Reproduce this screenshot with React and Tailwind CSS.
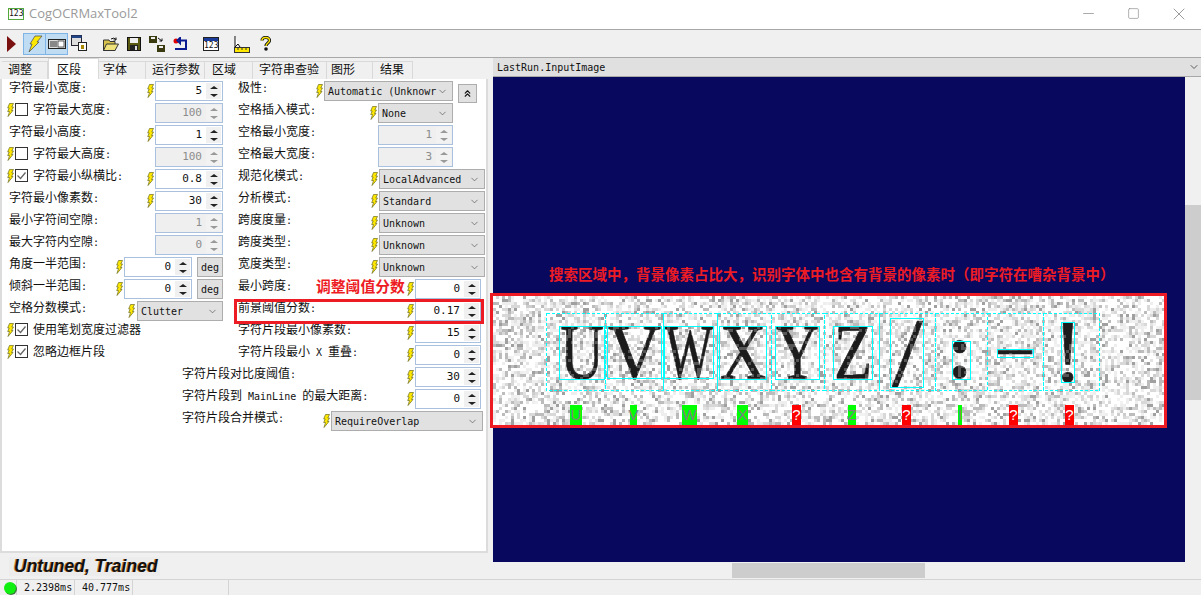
import React from 'react';
import { ChevronDown, ChevronsUp, Minus, Square, X } from 'lucide-react';

const cjk = "font-['Noto_Sans_CJK_SC','Liberation_Sans',sans-serif]";
const mono = "font-['DejaVu_Sans_Mono','Liberation_Mono',monospace]";

// mixes CJK and 6px wide latin, as the NSimSun labels do
const Label = ({ text }) => (
  <span className="whitespace-pre text-[12px] leading-[14px] text-[#111]">
    {text.split(/([ -~]+)/).map((part, i) =>
      /^[ -~]+$/.test(part) ? (
        <span key={i} className={`${mono} text-[10px]`}>{part}</span>
      ) : (
        <span key={i}>{part}</span>
      )
    )}
  </span>
);

const Bolt = ({ className = '' }) => (
  <svg width="7" height="14" viewBox="0 0 7 14" className={`shrink-0 ${className}`}>
    <path d="M2.5 .5H6.5L4.8 4H6.5L4.5 7.5H6L1 13.5L2.5 8.5H.7L2.2 5H.7Z" fill="#ffe800" stroke="#6a6a20" strokeWidth=".7" />
  </svg>
);

const Spinner = ({ value, disabled, width = 'w-[68px]' }) => (
  <div className={`${width} h-[20px] flex border border-[#a9c1de] ${disabled ? 'bg-[#efefef]' : 'bg-white'}`}>
    <div className={`flex-1 pr-[4px] text-right ${mono} text-[11px] leading-[18px] ${disabled ? 'text-[#8c8c8c]' : 'text-[#111]'}`}>{value}</div>
    <div className={`w-[15px] my-px mr-px flex flex-col justify-between ${disabled ? 'bg-[#dedede]' : 'bg-[#adadad]'}`}>
      <div className={`h-[8px] flex items-center justify-center ${disabled ? 'bg-[#f2f2f2]' : 'bg-[#f0f0f0]'}`}>
        <span className={`w-0 h-0 border-x-[4px] border-x-transparent border-b-[3px] ${disabled ? 'border-b-[#999]' : 'border-b-[#222]'}`} />
      </div>
      <div className={`h-[8px] flex items-center justify-center ${disabled ? 'bg-[#f2f2f2]' : 'bg-[#f0f0f0]'}`}>
        <span className={`w-0 h-0 border-x-[4px] border-x-transparent border-t-[3px] ${disabled ? 'border-t-[#999]' : 'border-t-[#222]'}`} />
      </div>
    </div>
  </div>
);

const Select = ({ value, width }) => (
  <div className={`${width} h-[20px] flex items-center justify-between pl-[3px] pr-[4px] bg-[#e1e1e1] border border-[#adadad] ${mono} text-[10px] text-[#111] overflow-hidden`}>
    <span className="whitespace-pre">{value}</span>
    <ChevronDown className="w-[11px] h-[11px] shrink-0 text-[#555]" strokeWidth={1.5} />
  </div>
);

const Check = ({ checked }) => (
  <span className="w-[13px] h-[13px] shrink-0 border border-[#333] bg-white flex items-center justify-center">
    {checked && (
      <svg width="11" height="11" viewBox="0 0 11 11"><path d="M1.5 5.5L4.5 8.5L9.5 2.5" fill="none" stroke="#666" strokeWidth="1.3" /></svg>
    )}
  </span>
);

const Deg = () => (
  <div className={`w-[26px] h-[20px] ml-[5px] flex items-center justify-center bg-[#e1e1e1] border border-[#adadad] ${mono} text-[10px] text-[#111]`}>deg</div>
);

const CheckLabel = ({ label, checked }) => (
  <div className="flex-1 flex items-center pl-[7px] pb-[7px]">
    <Bolt className="mr-[1px]" />
    <Check checked={checked} />
    <div className="ml-[5px] pb-[1px]"><Label text={label} /></div>
  </div>
);

// left column rows
const FieldRow = ({ label, value, disabled, check }) => (
  <div className="h-[22px] flex items-center pr-[9px]">
    {check === undefined ? (
      <div className="flex-1 pl-[9px] pb-[8px]"><Label text={label} /></div>
    ) : (
      <CheckLabel label={label} checked={check} />
    )}
    {!disabled && <Bolt className="mr-[1px]" />}
    <Spinner value={value} disabled={disabled} />
  </div>
);

const DegRow = ({ label }) => (
  <div className="h-[22px] flex items-center pr-[9px]">
    <div className="flex-1 pl-[9px] pb-[8px]"><Label text={label} /></div>
    <Bolt className="mr-[1px]" />
    <Spinner value="0" />
    <Deg />
  </div>
);

const MidSelect = ({ label, value, wide }) => (
  <div className={`h-[22px] flex items-center ${wide ? 'pr-[1px]' : 'pr-[33px]'}`}>
    <div className="flex-1 pl-[6px] pb-[8px]"><Label text={label} /></div>
    <Bolt className="mr-[1px]" />
    <Select value={value} width={wide ? 'w-[106px]' : 'w-[75px]'} />
  </div>
);

const MidSpin = ({ label, value, disabled, indent = 'pl-[6px]' }) => (
  <div className={`h-[22px] flex items-center ${disabled ? 'pr-[33px]' : 'pr-[5px]'}`}>
    <div className={`flex-1 ${indent} pb-[8px]`}><Label text={label} /></div>
    {!disabled && <Bolt className="mr-[1px]" />}
    <Spinner value={value} disabled={disabled} width={disabled ? 'w-[75px]' : 'w-[66px]'} />
  </div>
);

const tabs = [
  ['调整', 'w-[46px] pl-[6px]'],
  ['区段', 'w-[51px] pl-[8px]'],
  ['字体', 'w-[47px] pl-[4px]'],
  ['运行参数', 'w-[59px] pl-[6px]'],
  ['区域', 'w-[48px] pl-[7px]'],
  ['字符串查验', 'w-[74px] pl-[6px]'],
  ['图形', 'w-[46px] pl-[4px]'],
  ['结果', 'w-[40px] pl-[7px]'],
];

const ToolButton = ({ active, children, className = '' }) => (
  <div className={`w-[23px] h-[22px] flex items-center justify-center border ${active ? 'bg-[#c0dcf3] border-[#7fb4e6]' : 'border-transparent'} ${className}`}>{children}</div>
);

const Toolbar = () => (
  <div className="h-[28px] bg-[#f0f0f0] border-b border-[#a8a8a8] flex items-center pl-[7px]">
    <svg width="9" height="16" viewBox="0 0 9 16"><path d="M0 0L9 8L0 16Z" fill="#7a1010" /></svg>
    <ToolButton active className="ml-[7px]">
      <svg width="16" height="18" viewBox="0 0 16 18"><path d="M8 1H15L10 7L12 7L2 17L5 9L3 9Z" fill="#ffe800" stroke="#555" strokeWidth=".8" /></svg>
    </ToolButton>
    <ToolButton active className="-ml-px">
      <svg width="18" height="10" viewBox="0 0 18 10"><rect x=".5" y=".5" width="17" height="9" fill="#ddd" stroke="#222" /><rect x="2" y="2" width="7" height="6" fill="#888" /><rect x="10" y="2" width="6" height="6" fill="#fff" stroke="#222" strokeWidth=".7" /></svg>
    </ToolButton>
    <svg width="17" height="17" viewBox="0 0 17 17" className="ml-[3px]"><rect x=".5" y=".5" width="10" height="10" fill="#ddd" stroke="#223" /><rect x=".5" y=".5" width="10" height="2.5" fill="#248" /><rect x="7.5" y="7.5" width="8" height="8" fill="#fff" stroke="#222" /><rect x="10" y="10" width="3" height="4" fill="#a80" /></svg>
    <svg width="16" height="14" viewBox="0 0 16 14" className="ml-[15px]"><path d="M.5 3H6L7 4.5H12V13.5H.5Z" fill="#d6c24a" stroke="#333" /><path d="M.5 13.5L3.5 7H15.5L12 13.5Z" fill="#efe27a" stroke="#333" /><path d="M8 2Q11 0 13 2.5M13 .5V3H10.5" fill="none" stroke="#111" /></svg>
    <svg width="14" height="14" viewBox="0 0 14 14" className="ml-[8px]"><rect x=".5" y=".5" width="13" height="13" fill="#5a5a12" stroke="#111" /><rect x="3" y="1" width="8" height="5" fill="#eee" /><rect x="3" y="8" width="8" height="5.5" fill="#222" /><rect x="8" y="9" width="2" height="4" fill="#ddd" /></svg>
    <svg width="16" height="16" viewBox="0 0 16 16" className="ml-[8px]"><rect x="0" y="0" width="8" height="7" fill="#3a3a10" /><rect x="2" y="1" width="4" height="2" fill="#eee" /><rect x="8" y="9" width="8" height="7" fill="#3a3a10" /><rect x="10" y="10" width="4" height="2" fill="#eee" /><path d="M9 2L13 5M13 2.500V5H10.500" fill="none" stroke="#111" /></svg>
    <svg width="16" height="14" viewBox="0 0 16 14" className="ml-[8px]"><circle cx="3" cy="4" r="2.500" fill="#e00000" /><path d="M7 1L4.500 3.500L7 6ZM7 3.500H13V12H2" fill="none" stroke="#0a1a90" strokeWidth="2" /></svg>
    <div className={`ml-[14px] w-[16px] h-[14px] border border-[#222] bg-white ${mono} text-[8px] leading-[9px] text-center text-[#111]`}>
      <div className="h-[3px] bg-[#1c3c9c]" />123
    </div>
    <svg width="16" height="18" viewBox="0 0 16 18" className="ml-[15px]"><path d="M1 1V12L4 9L6 12" fill="#fff" stroke="#111" /><rect x=".5" y="12.500" width="15" height="5" fill="#ffe800" stroke="#333" /><path d="M4 13V15M8 13V15M12 13V15" stroke="#333" /></svg>
    <svg width="11" height="15" viewBox="0 0 11 15" className="ml-[10px]"><path d="M2 4.500C2 .5 9.500 .5 9.500 4.500C9.500 7 6 7 6 10" fill="none" stroke="#111" strokeWidth="3.200" /><path d="M2 4.500C2 .5 9.500 .5 9.500 4.500C9.500 7 6 7 6 10" fill="none" stroke="#ffe800" strokeWidth="1.400" /><circle cx="6" cy="13" r="1.800" fill="#111" /></svg>
  </div>
);

// seeded, so every render gives the same speckle
const rng = (seed) => () => {
  seed = (seed + 0x6d2b79f5) | 0;
  let t = Math.imul(seed ^ (seed >>> 15), 1 | seed);
  t = (t + Math.imul(t ^ (t >>> 7), 61 | t)) ^ t;
  return ((t ^ (t >>> 14)) >>> 0) / 4294967296;
};

const speckle = (() => {
  const r = rng(77);
  const d = ['', '', '', ''];
  const top = [];
  for (let y = 296; y < 426; y += 3) {
    for (let x = 494; x < 1165; x += 3) {
      const v = r();
      const cell = `M${x} ${y}h3v3h-3z`;
      if (v > 0.93) d[3] += cell;
      else if (v > 0.82) d[2] += cell;
      else if (v > 0.66) d[1] += cell;
      else if (v > 0.45) d[0] += cell;
      if (r() > 0.8) top.push(cell);
    }
  }
  return { d, top: top.join('') };
})();

const boxes = [
  [560, 326, 45, 53], [608, 326, 54, 52], [665, 326, 49, 52], [720, 326, 47, 53], [776, 326, 44, 53],
  [834, 326, 39, 53], [891, 318, 33, 69], [953, 341, 18, 38], [998, 349, 36, 8], [1062, 322, 13, 60],
];
const dashed = [[547, 59], [606, 58], [664, 54], [718, 54], [772, 53], [825, 55], [880, 56], [936, 52], [988, 56], [1044, 56]];
// char, left, baseline, x scale, size, family, weight
const glyphs = [
  ['U', 561, 378, 0.78, 78, 'Liberation Serif', 400],
  ['V', 609, 378, 0.94, 78, 'Liberation Serif', 400],
  ['W', 666, 378, 0.65, 78, 'Liberation Serif', 400],
  ['X', 721, 378, 0.82, 78, 'Liberation Serif', 400],
  ['Y', 777, 378, 0.76, 78, 'Liberation Serif', 400],
  ['Z', 835, 378, 0.8, 78, 'Liberation Serif', 400],
  ['/', 893, 386, 1.1, 100, 'Liberation Serif', 400],
  [':', 948, 378, 1, 78, 'Liberation Serif', 700],
  ['—', 999, 362, 0.94, 36, 'Liberation Sans', 700],
  ['!', 1054, 381, 1, 89, 'Liberation Serif', 400],
];
const tags = [
  [571, 12, 'U', true], [631, 7, 'V', true], [683, 15, 'W', true], [738, 11, 'X', true], [793, 9, '?', false],
  [849, 8, 'Z', true], [903, 9, '?', false], [959, 4, 'I', true], [1010, 9, '?', false], [1066, 9, '?', false],
];

const InspectImage = () => (
  <div className="-ml-[3px] w-[677px] h-[135px] border-[3px] border-[#ed1c24]">
    <svg width="671" height="129" viewBox="494 296 671 129" className="block bg-white" shapeRendering="crispEdges">
      {speckle.d.map((d, i) => (
        <path key={i} d={d} fill={['#eeeeee', '#d8d8d8', '#bcbcbc', '#a0a0a0'][i]} />
      ))}
      <g shapeRendering="auto">
        {glyphs.map(([c, x, y, sx, s, family, weight]) => (
          <text key={c} transform={`translate(${x} ${y}) scale(${sx} 1)`} fontSize={s} fontWeight={weight} fontFamily={family} fill="#1c1c1c" stroke="#1c1c1c" strokeWidth=".7">{c}</text>
        ))}
      </g>
      <path d={speckle.top} fill="#fff" opacity=".25" />
      {dashed.map(([x, w]) => (
        <rect key={x} x={x + 0.5} y={313.5} width={w} height={77} fill="none" stroke="#00ffff" strokeDasharray="3 2" />
      ))}
      {boxes.map(([x, y, w, h]) => (
        <rect key={x} x={x + 0.5} y={y + 0.5} width={w} height={h} fill="none" stroke="#00ffff" />
      ))}
      {tags.map(([x, w, c, ok]) => (
        <g key={x}>
          <rect x={x} y={405} width={w} height={20} fill={ok ? '#00ff00' : '#ff0000'} />
          <text x={x + w / 2} y={420} fontSize="15" textAnchor="middle" fontFamily="'Liberation Sans',sans-serif" fill={ok ? '#808080' : '#ffffff'} shapeRendering="auto">{c}</text>
        </g>
      ))}
    </svg>
  </div>
);

export default function App() {
  return (
    <div className={`w-[1201px] h-[595px] flex flex-col overflow-hidden bg-[#f0f0f0] ${cjk}`}>
      <div className="h-[30px] shrink-0 bg-white border-b border-[#a8a8a8] flex items-center pl-[8px] pb-[2px]">
        <div className={`w-[16px] h-[12px] border border-[#52a83c] ${mono} text-[8px] leading-[10px] text-center text-[#111]`}>123</div>
        <span className="ml-[5px] font-['Open_Sans',sans-serif] text-[13px] text-[#9a9a9a]">CogOCRMaxTool2</span>
        <div className="ml-auto flex items-center text-[#888]">
          <Minus className="w-[17px] h-[17px]" strokeWidth={1} />
          <Square className="ml-[30px] w-[13px] h-[13px]" strokeWidth={1.200} />
          <X className="ml-[29px] mr-[12px] w-[20px] h-[20px]" strokeWidth={1} />
        </div>
      </div>
      <Toolbar />
      <div className="flex-1 flex min-h-0">
        <div className="w-[488px] shrink-0 flex flex-col">
          <div className="h-[21px] flex items-end pl-[2px] text-[12px] text-[#111]">
            {tabs.map(([name, cls]) => (
              <div key={name} className={`${cls} border-r border-[#d9d9d9] ${name === '区段' ? 'h-[21px] bg-white border-l border-t' : 'h-[18px] border-t'} border-t-[#d9d9d9] leading-[14px] whitespace-nowrap`}>
                {name === '区段' ? <div className="pt-[3px]">{name}</div> : name}
              </div>
            ))}
          </div>
          <div className="h-[474px] bg-white border-x-2 border-b-2 border-x-[#dcdcdc] border-b-[#dcdcdc] pt-px text-[12px]">
            <div className="flex -ml-[2px]">
              <div className="w-[232px] shrink-0">
                <FieldRow label="字符最小宽度:" value="5" />
                <FieldRow label="字符最大宽度:" value="100" disabled check={false} />
                <FieldRow label="字符最小高度:" value="1" />
                <FieldRow label="字符最大高度:" value="100" disabled check={false} />
                <FieldRow label="字符最小纵横比:" value="0.8" check={true} />
                <FieldRow label="字符最小像素数:" value="30" />
                <FieldRow label="最小字符间空隙:" value="1" disabled />
                <FieldRow label="最大字符内空隙:" value="0" disabled />
                <DegRow label="角度一半范围:" />
                <DegRow label="倾斜一半范围:" />
                <div className="h-[22px] flex items-center pr-[9px]">
                  <div className="flex-1 pl-[9px] pb-[8px]"><Label text="空格分数模式:" /></div>
                  <Bolt className="mr-[2px]" />
                  <Select value="Clutter" width="w-[86px]" />
                </div>
                <div className="h-[22px] flex items-center">
                  <CheckLabel label="使用笔划宽度过滤器" checked />
                </div>
                <div className="h-[22px] flex items-center">
                  <CheckLabel label="忽略边框片段" checked />
                </div>
              </div>
              <div className="flex-1 min-w-0">
                <div className="h-[22px] flex items-center pr-[1px]">
                  <div className="flex-1 pl-[6px] pb-[8px]"><Label text="极性:" /></div>
                  <Bolt className="mr-[1px]" />
                  <Select value="Automatic (Unknowr" width="w-[129px]" />
                  <div className="ml-[5px] mt-[4px] mr-[8px] w-[19px] h-[19px] flex items-center justify-center bg-[#e1e1e1] border border-[#adadad]">
                    <ChevronsUp className="w-[11px] h-[11px] text-[#111]" strokeWidth={2.500} />
                  </div>
                </div>
                <MidSelect label="空格插入模式:" value="None" />
                <MidSpin label="空格最小宽度:" value="1" disabled />
                <MidSpin label="空格最大宽度:" value="3" disabled />
                <MidSelect label="规范化模式:" value="LocalAdvanced" wide />
                <MidSelect label="分析模式:" value="Standard" wide />
                <MidSelect label="跨度度量:" value="Unknown" wide />
                <MidSelect label="跨度类型:" value="Unknown" wide />
                <MidSelect label="宽度类型:" value="Unknown" wide />
                <div className="relative">
                  <MidSpin label="最小跨度:" value="0" />
                  <span className="absolute left-[84px] top-[-1px] text-[14.800px] leading-[18px] font-bold text-[#ed1c24] whitespace-nowrap">调整阈值分数</span>
                </div>
                <div className="relative">
                  <MidSpin label="前景阈值分数:" value="0.17" />
                  <div className="absolute left-[2px] top-[-1px] w-[250px] h-[25px] border-[3px] border-[#ed1c24]" />
                </div>
                <MidSpin label="字符片段最小像素数:" value="15" />
                <MidSpin label="字符片段最小 X 重叠:" value="0" />
              </div>
            </div>
            <div className="-ml-[2px]">
              <MidSpin label="字符片段对比度阈值:" value="30" indent="pl-[182px]" />
              <MidSpin label="字符片段到 MainLine 的最大距离:" value="0" indent="pl-[182px]" />
              <div className="h-[22px] flex items-center pr-[3px]">
                <div className="flex-1 pl-[182px] pb-[8px]"><Label text="字符片段合并模式:" /></div>
                <Bolt className="mr-[1px]" />
                <Select value="RequireOverlap" width="w-[152px]" />
              </div>
            </div>
          </div>
          <div className="flex-1 flex items-center pl-[9px]">
            <div className="w-[151px] h-[19px] pl-[5px] bg-[#ececec] font-['Liberation_Sans',sans-serif] font-bold italic text-[17.500px] leading-[19px] text-[#111] [text-shadow:-1px_0_0_#c9853a]">Untuned, Trained</div>
          </div>
        </div>
        <div className="flex-1 min-w-0 ml-[5px] flex flex-col">
          <div className={`h-[19px] shrink-0 flex items-center justify-between pl-[4px] pr-[1px] bg-[#e0e0e0] border-b border-[#a8a8a8] ${mono} text-[10px] text-[#111]`}>
            <span>LastRun.InputImage</span>
            <ChevronDown className="w-[12px] h-[12px] text-[#333]" strokeWidth={1.500} />
          </div>
          <div className="flex-1 min-h-0 flex">
            <div className="w-[692px] shrink-0 bg-[#08085f] pt-[187px]">
              <div className="ml-[56px] h-[29px] text-[14.500px] leading-[20px] font-bold text-[#ed1c24] whitespace-nowrap">搜索区域中，背景像素占比大，识别字体中也含有背景的像素时（即字符在嘈杂背景中）</div>
              <InspectImage />
            </div>
            <div className="flex-1 flex flex-col bg-[#f0f0f0]">
              <div className="h-[128px]" />
              <div className="h-[195px] bg-[#cdcdcd]" />
            </div>
          </div>
          <div className="h-[17px] shrink-0 bg-[#f0f0f0] flex items-center">
            <div className="ml-[239px] w-[193px] h-[15px] bg-[#cdcdcd]" />
          </div>
        </div>
      </div>
      <div className={`h-[16px] shrink-0 border-t border-[#d4d4d4] flex items-center ${mono} text-[10px] text-[#111]`}>
        <div className="w-[17px] h-full flex items-center pl-[4px] border-r border-[#d4d4d4]">
          <span className="w-[12px] h-[12px] rounded-full bg-[#10f010] shadow-[1px_1px_0_#3c7a3c]" />
        </div>
        <div className="w-[58px] h-full pl-[7px] border-r border-[#d4d4d4] leading-[15px]">2.2398ms</div>
        <div className="w-[58px] h-full pl-[7px] border-r border-[#d4d4d4] leading-[15px]">40.777ms</div>
        <div className="w-[96px] h-full border-r border-[#d4d4d4]" />
      </div>
    </div>
  );
}
